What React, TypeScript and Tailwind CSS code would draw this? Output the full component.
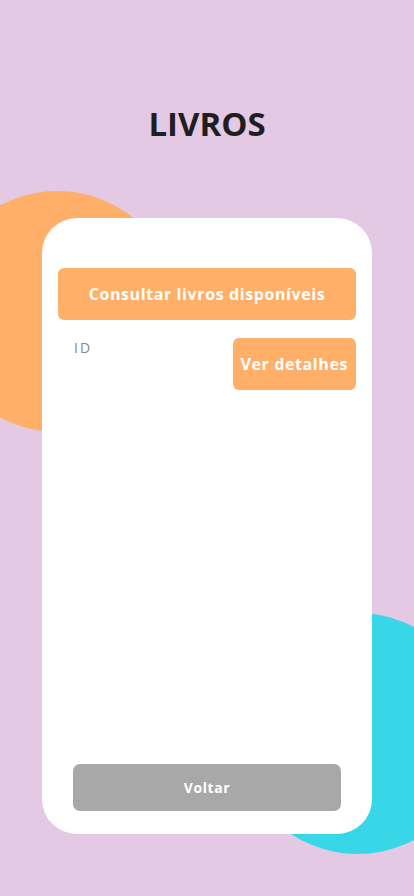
export default function App() {
  return (
    <div
      className="relative flex min-h-[896px] w-full flex-col items-center overflow-hidden bg-[#e3c9e4]"
      style={{ fontFamily: '"Open Sans", "Liberation Sans", sans-serif' }}
    >
      {/* decorative blobs */}
      <div className="absolute left-[-63px] top-[191px] h-[241px] w-[241px] rounded-full bg-[#ffaf68]" />
      <div className="absolute left-[237px] top-[613px] h-[241px] w-[241px] rounded-full bg-[#38d7e7]" />

      <h1 className="relative mt-[104px] text-[33px] font-bold leading-[40px] text-[#1f1f1f]">
        LIVROS
      </h1>

      {/* card */}
      <div className="relative mt-[74px] flex h-[616px] w-[330px] flex-col rounded-[35px] bg-white px-4 pt-[50px] pb-[23px]">
        <button className="h-[52px] w-full rounded-[6px] bg-[#ffaf68] text-[16px] font-bold tracking-[0.6px] text-white">
          Consultar livros disponíveis
        </button>

        <div className="mt-[18px] flex items-start justify-between">
          <span className="ml-4 mt-[-1px] text-[14px] tracking-[2px] text-[#888]">ID</span>
          <button className="h-[52px] rounded-[6px] bg-[#ffaf68] px-[8px] text-[16px] font-bold tracking-[0.6px] text-white">
            Ver detalhes
          </button>
        </div>

        <div className="flex-1" />

        <button className="mx-[15px] h-[47px] rounded-[7px] bg-[#a8a8a8] text-[14px] font-bold tracking-[0.6px] text-white">
          Voltar
        </button>
      </div>
    </div>
  );
}
